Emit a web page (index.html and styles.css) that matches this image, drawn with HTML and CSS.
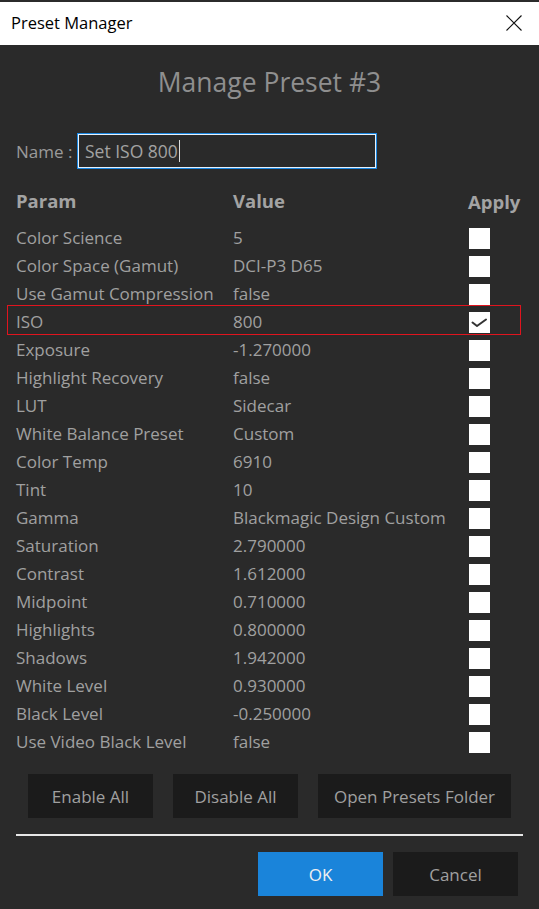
FILE: index.html
```html
<!DOCTYPE html>
<html>
<head>
<meta charset="utf-8">
<link rel="stylesheet" href="styles.css">
</head>
<body>
<div class="window">
  <div class="titlebar">
    <span class="title">Preset Manager</span>
    <svg class="close" width="16" height="16" viewBox="0 0 16 16"><path d="M0.5 0.5 L15.5 15.5 M15.5 0.5 L0.5 15.5" stroke="#111" stroke-width="1.1" fill="none"/></svg>
  </div>
  <div class="content">
    <h1 class="heading">Manage Preset #3</h1>
    <div class="name-row">
      <span class="name-label">Name :</span>
      <div class="name-input"><span>Set ISO 800</span><span class="caret"></span></div>
    </div>
    <div class="table">
      <div class="row head"><span class="c-param">Param</span><span class="c-value">Value</span><span class="c-apply">Apply</span></div>
      <div class="row"><span class="c-param">Color Science</span><span class="c-value">5</span><span class="box"></span></div>
      <div class="row"><span class="c-param">Color Space (Gamut)</span><span class="c-value">DCI-P3 D65</span><span class="box"></span></div>
      <div class="row"><span class="c-param">Use Gamut Compression</span><span class="c-value">false</span><span class="box"></span></div>
      <div class="row selected"><span class="c-param">ISO</span><span class="c-value">800</span><span class="box"><svg width="21" height="21" viewBox="0 0 21 21"><path d="M3.5 10.5 L8 14 L17 7.5" stroke="#333" stroke-width="2" fill="none" stroke-linecap="round" stroke-linejoin="round"/></svg></span></div>
      <div class="row"><span class="c-param">Exposure</span><span class="c-value">-1.270000</span><span class="box"></span></div>
      <div class="row"><span class="c-param">Highlight Recovery</span><span class="c-value">false</span><span class="box"></span></div>
      <div class="row"><span class="c-param">LUT</span><span class="c-value">Sidecar</span><span class="box"></span></div>
      <div class="row"><span class="c-param">White Balance Preset</span><span class="c-value">Custom</span><span class="box"></span></div>
      <div class="row"><span class="c-param">Color Temp</span><span class="c-value">6910</span><span class="box"></span></div>
      <div class="row"><span class="c-param">Tint</span><span class="c-value">10</span><span class="box"></span></div>
      <div class="row"><span class="c-param">Gamma</span><span class="c-value">Blackmagic Design Custom</span><span class="box"></span></div>
      <div class="row"><span class="c-param">Saturation</span><span class="c-value">2.790000</span><span class="box"></span></div>
      <div class="row"><span class="c-param">Contrast</span><span class="c-value">1.612000</span><span class="box"></span></div>
      <div class="row"><span class="c-param">Midpoint</span><span class="c-value">0.710000</span><span class="box"></span></div>
      <div class="row"><span class="c-param">Highlights</span><span class="c-value">0.800000</span><span class="box"></span></div>
      <div class="row"><span class="c-param">Shadows</span><span class="c-value">1.942000</span><span class="box"></span></div>
      <div class="row"><span class="c-param">White Level</span><span class="c-value">0.930000</span><span class="box"></span></div>
      <div class="row"><span class="c-param">Black Level</span><span class="c-value">-0.250000</span><span class="box"></span></div>
      <div class="row"><span class="c-param">Use Video Black Level</span><span class="c-value">false</span><span class="box"></span></div>
    </div>
    <div class="actions">
      <button class="btn w125">Enable All</button>
      <button class="btn w125">Disable All</button>
      <button class="btn w193">Open Presets Folder</button>
    </div>
    <div class="separator"></div>
    <div class="footer">
      <button class="btn w125 primary">OK</button>
      <button class="btn w125">Cancel</button>
    </div>
  </div>
</div>
</body>
</html>
```
FILE: styles.css
```css
html, body {
  margin: 0;
  padding: 0;
}
body {
  width: 539px;
  height: 909px;
  overflow: hidden;
  background: #2a2a2a;
  font-family: "Open Sans", "Noto Sans", sans-serif;
}
.window {
  width: 539px;
  height: 909px;
  background: #2a2a2a;
}
.titlebar {
  box-sizing: border-box;
  height: 45px;
  border-top: 2px solid #2b2b2b;
  background: #ffffff;
  display: flex;
  align-items: center;
  justify-content: space-between;
  padding: 0 17px 0 11px;
}
.title {
  font-size: 16.5px;
  color: #000;
  margin-top: -2px;
}
.close {
  display: block;
  margin-top: -1px;
}
.content {
  display: flex;
  flex-direction: column;
}
.heading {
  margin: 19px 0 0;
  font-weight: 400;
  font-size: 26.5px;
  line-height: 36px;
  text-align: center;
  color: #8f8f8f;
}
.name-row {
  margin-top: 33px;
  height: 36px;
  display: flex;
  align-items: center;
  padding-left: 16px;
}
.name-label {
  font-size: 17px;
  color: #9a9a9a;
  width: 61px;
}
.name-input {
  box-sizing: border-box;
  width: 300px;
  height: 36px;
  border: 1px solid #1a86e0;
  box-shadow: inset 0 0 0 1px #e8f2fb;
  background: #2a2a2a;
  display: flex;
  align-items: center;
  padding-left: 7px;
  font-size: 17.5px;
  color: #a2a2a2;
}
.caret {
  display: inline-block;
  width: 1px;
  height: 22px;
  background: #dcdcdc;
  margin-left: 1px;
}
.table {
  margin-top: 18px;
  display: flex;
  flex-direction: column;
}
.row {
  position: relative;
  height: 28px;
  display: flex;
  align-items: center;
  margin: 0 18px 0 7px;
  padding-left: 9px;
  font-size: 17px;
  color: #a0a0a0;
}
.row.head {
  font-weight: 700;
  font-size: 18.5px;
  margin-bottom: 9px;
  color: #a3a3a3;
}
.c-param {
  width: 217px;
  white-space: nowrap;
  margin-top: -1px;
}
.c-value {
  width: 236px;
  white-space: nowrap;
  margin-top: -1px;
}
.c-apply {
  margin-left: -1px;
}
.box {
  width: 21px;
  height: 21px;
  background: #ffffff;
  display: block;
}
.box svg {
  display: block;
}
.row.selected::after {
  content: "";
  position: absolute;
  left: 0;
  right: 0;
  top: -3px;
  bottom: 1px;
  border: 1px solid #e0141e;
  pointer-events: none;
}
.actions {
  margin-top: 18px;
  display: flex;
  gap: 20px;
  padding-left: 28px;
}
.btn {
  box-sizing: border-box;
  height: 44px;
  border: none;
  background: #1b1b1b;
  color: #a0a0a0;
  font-family: "Open Sans", "Noto Sans", sans-serif;
  font-size: 17px;
  padding: 0;
}
.w125 { width: 125px; }
.w193 { width: 193px; }
.separator {
  margin: 16px 16px 0 16px;
  height: 2px;
  background: #e6e6e6;
}
.footer {
  margin-top: 16px;
  display: flex;
  justify-content: flex-end;
  gap: 10px;
  padding-right: 21px;
}
.btn.primary {
  background: #1a84da;
  color: #f0f0f0;
}
```
